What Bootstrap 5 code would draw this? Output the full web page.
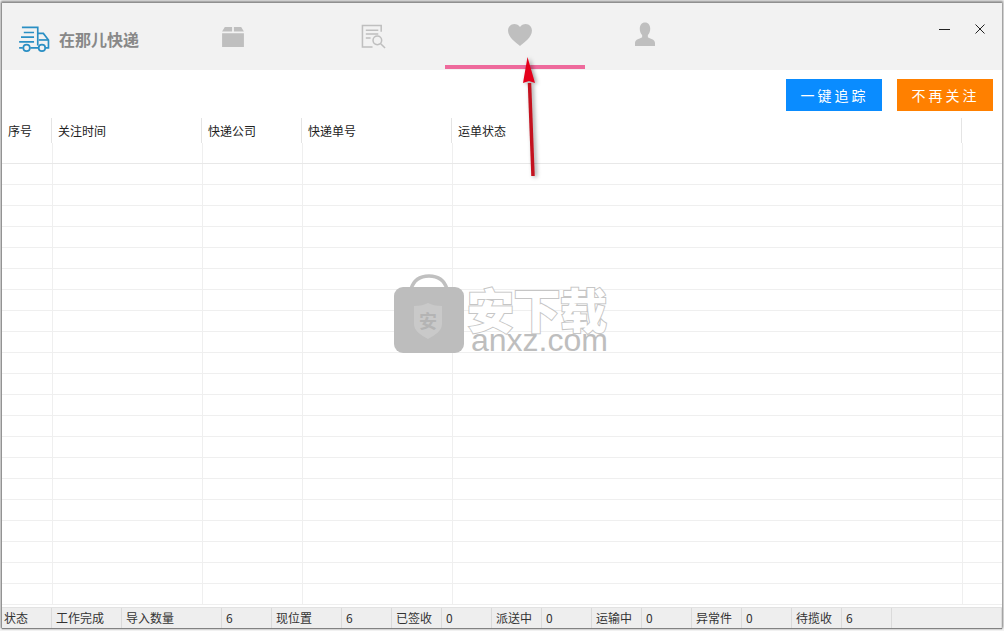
<!DOCTYPE html>
<html lang="zh-CN">
<head>
    <meta charset="UTF-8">
    <meta name="viewport" content="width=device-width, initial-scale=1.0">
    <title>在那儿快递</title>
    <link href="https://cdn.jsdelivr.net/npm/bootstrap@5.3.2/dist/css/bootstrap.min.css" rel="stylesheet">
    <style>
        html, body { height: 100%; }
        body {
            background: #f1f1f1;
            font-family: "Noto Sans CJK SC", "Liberation Sans", sans-serif;
            font-size: 12px;
            color: #222;
            overflow: hidden;
        }
        .app-frame { padding: 3px 2px 3px 2px; height: 631px; }
        .app-window { background: #fff; height: 100%; position: relative; box-shadow: 0 -1px 2px 1px #8a8a8a, -1px 0 1px #a8a8a8, 0 1px 1px #777; }
        .top-bar { height: 67px; background: #f2f2f2; flex: none; }
        .brand-zone { width: 163px; padding: 23px 0 0 17px; gap: 9px; }
        .brand-name { font-size: 16px; font-weight: 700; color: #888; line-height: 22px; margin-top: 2px; }
        .tab-cell { width: 140px; height: 67px; position: relative; }
        .tab-on::after { content: ""; position: absolute; left: 0; right: 0; bottom: 0; height: 5px; background: #ee6a9c; border-bottom: 1px solid #f2f2f2; }
        .win-btns { margin-left: auto; gap: 25px; padding: 17px 17px 0 0; }
        .tool-row { height: 48px; gap: 15px; padding: 9px 9px 0 0; flex: none; }
        .act-btn { width: 96px; height: 32px; border: 0; border-radius: 0; color: #fff; font-size: 14px; letter-spacing: 3px; padding: 0 0 0 1px; line-height: 32px; }
        .act-blue { background: #0a8cff; }
        .act-orange { background: #ff8000; }
        .grid-head { height: 26px; flex: none; }
        .grid-head > div { line-height: 26px; padding-left: 6px; color: #222; border-right: 1px solid #e4e4e4; height: 25px; }
        .grid-spacer { height: 19px; flex: none; }
        .grid-body { flex: 1 1 auto; overflow: hidden; margin-top: -20px; }
        .sheet { border-collapse: collapse; table-layout: fixed; width: 1000px; }
        .sheet td { height: 21px; padding: 0; border-right: 1px solid #efefef; border-bottom: 1px solid #efefef; }
        .sheet tr.first-row td { height: 20px; border-bottom-color: #e8e8e8; }
        .sheet td:last-child { border-right: 0; }
        .status-bar { height: 21px; background: #eee; border-top: 1px solid #e2e2e2; flex: none; }
        .status-bar > div { height: 100%; line-height: 20px; padding-left: 4px; border-right: 1px solid #dadada; color: #333; white-space: nowrap; }
        .status-bar > div:first-child { padding-left: 2px; }
        .mark-layer { position: absolute; left: 392px; top: 271px; pointer-events: none; }
        .mark-cn { position: absolute; left: 73px; top: 13px; font-size: 47px; line-height: 41px; font-weight: 900; color: #fff; -webkit-text-stroke: 2px #c6c6c6; paint-order: stroke fill; letter-spacing: -.5px; white-space: nowrap; }
        .mark-en { position: absolute; left: 77px; top: 54px; font-family: "Liberation Sans", sans-serif; font-size: 32px; line-height: 24px; color: #bebebe; white-space: nowrap; }
        .mark-seal { position: absolute; left: 24px; top: 35px; width: 20px; text-align: center; font-size: 18px; line-height: 22px; font-weight: 700; color: #b4b4b4; }
        .red-arrow { position: absolute; left: 510px; top: 53px; pointer-events: none; filter: drop-shadow(2px 1px 2px rgba(0,0,0,.4)); }
    </style>
</head>
<body>
    <div class="app-frame">
        <div class="app-window d-flex flex-column">
            <div class="top-bar d-flex">
                <div class="brand-zone d-flex">
                    <svg width="31" height="27" viewBox="0 0 33 29" fill="none" stroke="#2a8fc4" stroke-width="1.8">
                        <path d="M3 1.5H20V21"/>
                        <path d="M20 8H26L31.500 15V23.500H28"/>
                        <path d="M21 15H31"/>
                        <path d="M5 7H16M2 12H16M0 17H16"/>
                        <path d="M0 23.500H4M12 23.500H21"/>
                        <circle cx="8" cy="23.500" r="3.500"/>
                        <circle cx="24.500" cy="23.500" r="3.500"/>
                    </svg>
                    <div class="brand-name">在那儿快递</div>
                </div>
                <div class="tab-cell">
                    <svg class="position-absolute" style="left:56px;top:24px" width="24" height="20" viewBox="0 0 26 22" fill="#bfbfbf"><path d="M4 0H12V5H1ZM14 0H22L25 5H14ZM1 7H25V22H1Z"/></svg>
                </div>
                <div class="tab-cell">
                    <svg class="position-absolute" style="left:56px;top:21px" width="25" height="25" viewBox="0 0 26 26" fill="none" stroke="#bfbfbf" stroke-width="1.6"><path d="M21 8V1.500H1.500V24H12"/><path d="M5 6.500H18M5 10.500H18M5 14.500H10"/><circle cx="17" cy="17" r="4.500"/><path d="M20.500 20.500L25 25"/></svg>
                </div>
                <div class="tab-cell tab-on">
                    <svg class="position-absolute" style="left:63px;top:21px" width="24" height="22" viewBox="0 0 25 23" fill="#bfbfbf"><path d="M12.500 23C8 19 0 14 0 6.800 0 3 3 0 6.500 0 9 0 11.200 1.200 12.500 3.200 13.800 1.200 16 0 18.500 0 22 0 25 3 25 6.800 25 14 17 19 12.500 23Z"/></svg>
                </div>
                <div class="tab-cell">
                    <svg class="position-absolute" style="left:50px;top:19px" width="20" height="25" viewBox="0 0 21 25" fill="#bfbfbf"><path d="M10.500 0C14 0 16 2.800 16 6.500 16 9.500 14.800 11.800 13.500 13V15.500C15.500 17 21 17.500 21 21.500V24.500H0V21.500C0 17.500 5.500 17 7.500 15.500V13C6.200 11.800 5 9.500 5 6.500 5 2.800 7 0 10.500 0Z"/></svg>
                </div>
                <div class="win-btns d-flex align-items-start">
                    <svg class="mt-1" width="11" height="11" viewBox="0 0 11 11" stroke="#222" stroke-width="1"><path d="M0 5.500H11"/></svg>
                    <svg class="mt-1" width="10" height="10" viewBox="0 0 10 10" stroke="#222" stroke-width="1"><path d="M.5 .5L9.500 9.500M9.500 .5L.5 9.500"/></svg>
                </div>
            </div>
            <div class="tool-row d-flex justify-content-end">
                <button class="act-btn act-blue">一键追踪</button>
                <button class="act-btn act-orange">不再关注</button>
            </div>
            <div class="grid-head d-flex">
                <div style="width:50px">序号</div>
                <div style="width:150px">关注时间</div>
                <div style="width:100px">快递公司</div>
                <div style="width:150px">快递单号</div>
                <div style="width:510px">运单状态</div>
            </div>
            <div class="grid-spacer"></div>
            <div class="grid-body">
                <table class="sheet" id="sheet">
                    <colgroup><col style="width:50px"><col style="width:150px"><col style="width:100px"><col style="width:150px"><col style="width:510px"><col></colgroup>
                    <tbody id="rows"></tbody>
                </table>
            </div>
            <div class="status-bar d-flex" id="status"></div>

            <div class="mark-layer">
                <svg width="72" height="84" viewBox="0 0 72 84">
                    <path d="M17 15C20 5 27 2 35 2S50 5 53 15" fill="none" stroke="#c0c0c0" stroke-width="3.500"/>
                    <rect x="0" y="13" width="70" height="66" rx="9" fill="#bdbdbd"/>
                    <path d="M20 32C26 32 30 31 34 29 38 31 42 32 48 32V50C48 57 41 61 34 65 27 61 20 57 20 50Z" fill="#c9c9c9"/>
                </svg>
                <div class="mark-seal">安</div>
                <div class="mark-cn">安下载</div>
                <div class="mark-en">anxz.com</div>
            </div>
            <svg class="red-arrow" width="36" height="130" viewBox="0 0 36 130">
                <path d="M17.500 27L21 120" stroke="#c4121f" stroke-width="3.500" fill="none"/>
                <path d="M15.500 1L11 27 17 25 23 27Z" fill="#e4001b"/>
            </svg>
        </div>
    </div>
    <script>
        const rows = document.getElementById('rows');
        for (let i = 0; i < 22; i++) {
            const tr = document.createElement('tr');
            if (i === 0) tr.className = 'first-row';
            for (let c = 0; c < 6; c++) tr.appendChild(document.createElement('td'));
            rows.appendChild(tr);
        }
        const cells = [
            ['状态', 50], ['工作完成', 70], ['导入数量', 100], ['6', 50], ['现位置', 70], ['6', 50],
            ['已签收', 50], ['0', 50], ['派送中', 50], ['0', 50], ['运输中', 50], ['0', 50],
            ['异常件', 50], ['0', 50], ['待揽收', 50], ['6', 50], ['', 110]
        ];
        const status = document.getElementById('status');
        cells.forEach(([text, width]) => {
            const div = document.createElement('div');
            div.textContent = text;
            div.style.width = width + 'px';
            status.appendChild(div);
        });
    </script>
    <script src="https://cdn.jsdelivr.net/npm/bootstrap@5.3.2/dist/js/bootstrap.bundle.min.js"></script>
</body>
</html>
